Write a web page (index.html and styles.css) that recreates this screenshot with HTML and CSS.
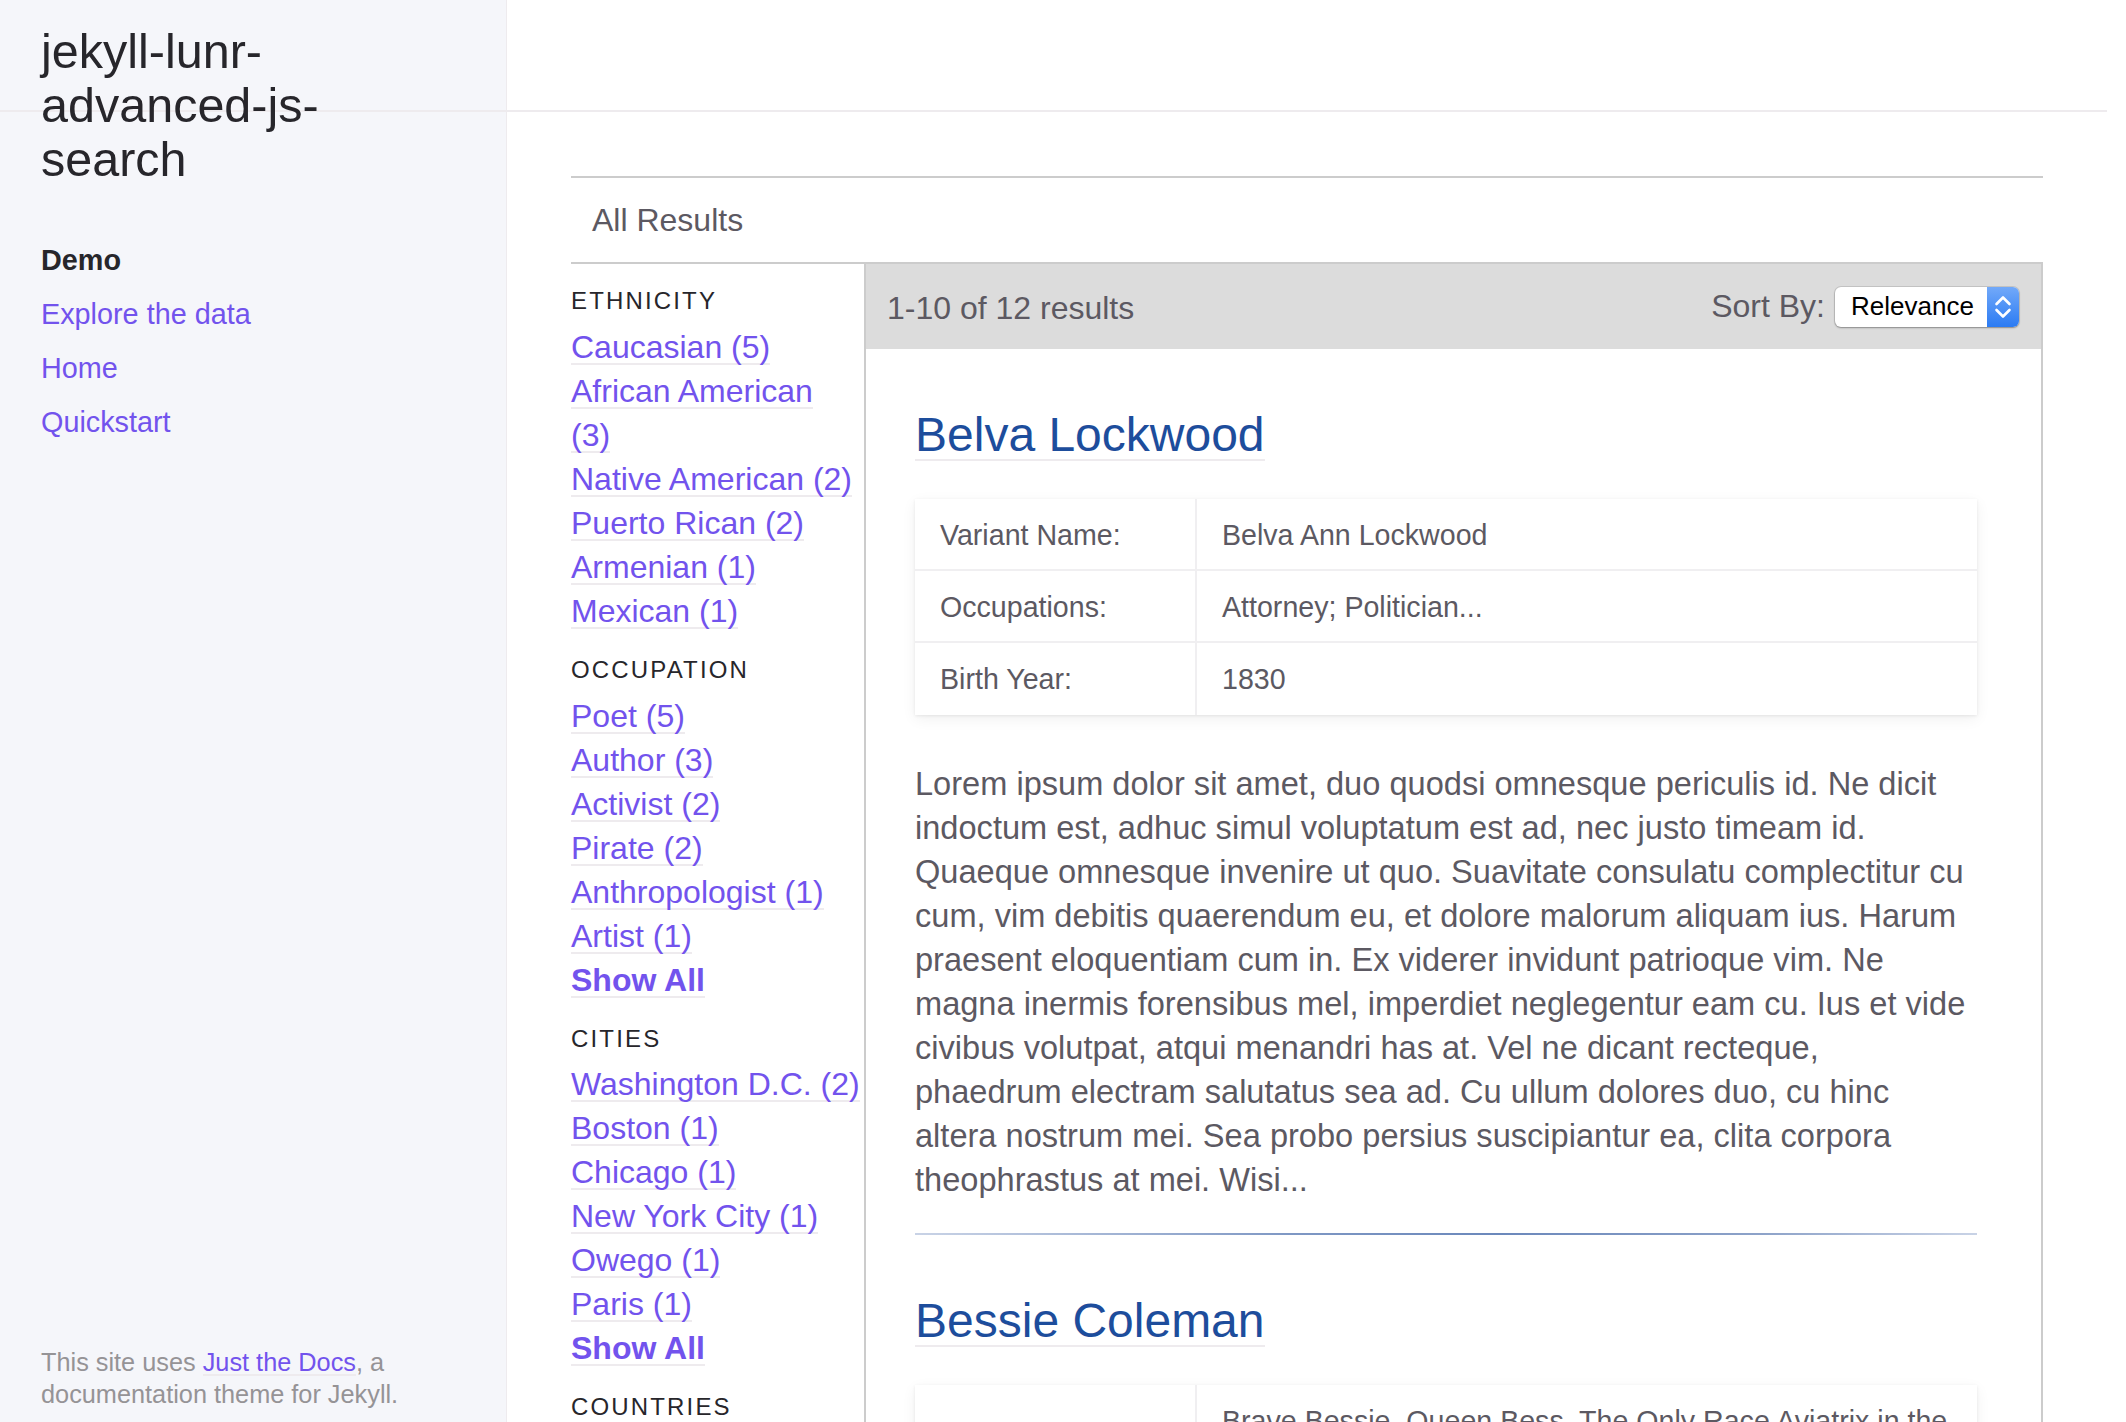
FILE: index.html
```html
<!DOCTYPE html>
<html lang="en">
<head>
<meta charset="utf-8">
<title>Demo - jekyll-lunr-advanced-js-search</title>
<link rel="stylesheet" href="styles.css">
</head>
<body>
<div class="page">
  <aside class="sidebar">
    <h1 class="site-title">jekyll-lunr-advanced-js-search</h1>
    <nav class="nav">
      <div class="nav-item nav-heading">Demo</div>
      <div class="nav-item"><a class="nav-link" href="#">Explore the data</a></div>
      <div class="nav-item"><a class="nav-link" href="#">Home</a></div>
      <div class="nav-item"><a class="nav-link" href="#">Quickstart</a></div>
    </nav>
    <footer class="site-footer">This site uses <a class="ul footer-link" href="#">Just the Docs</a>, a documentation theme for Jekyll.</footer>
  </aside>

  <main class="main">
    <header class="main-header"></header>
    <div class="content">
      <section class="search-box">
        <div class="box-title">All Results</div>
        <div class="box-body">
          <div class="facets">
            <div class="facet-heading first">Ethnicity</div>
            <div class="facet-item"><a class="ul" href="#">Caucasian (5)</a></div>
            <div class="facet-item"><a class="ul" href="#">African American (3)</a></div>
            <div class="facet-item"><a class="ul" href="#">Native American (2)</a></div>
            <div class="facet-item"><a class="ul" href="#">Puerto Rican (2)</a></div>
            <div class="facet-item"><a class="ul" href="#">Armenian (1)</a></div>
            <div class="facet-item"><a class="ul" href="#">Mexican (1)</a></div>

            <div class="facet-heading">Occupation</div>
            <div class="facet-item"><a class="ul" href="#">Poet (5)</a></div>
            <div class="facet-item"><a class="ul" href="#">Author (3)</a></div>
            <div class="facet-item"><a class="ul" href="#">Activist (2)</a></div>
            <div class="facet-item"><a class="ul" href="#">Pirate (2)</a></div>
            <div class="facet-item"><a class="ul" href="#">Anthropologist (1)</a></div>
            <div class="facet-item"><a class="ul" href="#">Artist (1)</a></div>
            <div class="facet-item"><a class="ul show-all" href="#">Show All</a></div>

            <div class="facet-heading">Cities</div>
            <div class="facet-item"><a class="ul" href="#">Washington D.C. (2)</a></div>
            <div class="facet-item"><a class="ul" href="#">Boston (1)</a></div>
            <div class="facet-item"><a class="ul" href="#">Chicago (1)</a></div>
            <div class="facet-item"><a class="ul" href="#">New York City (1)</a></div>
            <div class="facet-item"><a class="ul" href="#">Owego (1)</a></div>
            <div class="facet-item"><a class="ul" href="#">Paris (1)</a></div>
            <div class="facet-item"><a class="ul show-all" href="#">Show All</a></div>

            <div class="facet-heading">Countries</div>
            <div class="facet-item"><a class="ul" href="#">United States (10)</a></div>
            <div class="facet-item"><a class="ul" href="#">France (1)</a></div>
          </div>

          <div class="results">
            <div class="results-bar">
              <div class="count">1-10 of 12 results</div>
              <div class="sort">
                <span class="sort-label">Sort By:</span>
                <div class="select">
                  <span class="select-value">Relevance</span>
                  <span class="stepper">
                    <svg width="32" height="40" viewBox="0 0 32 40" aria-hidden="true">
                      <path d="M9.5 17 L16 10.5 L22.5 17" fill="none" stroke="#fff" stroke-width="2.6" stroke-linecap="round" stroke-linejoin="round"/>
                      <path d="M9.5 23 L16 29.5 L22.5 23" fill="none" stroke="#fff" stroke-width="2.6" stroke-linecap="round" stroke-linejoin="round"/>
                    </svg>
                  </span>
                </div>
              </div>
            </div>

            <article class="result">
              <h2 class="result-name"><a class="ul name-link" href="#">Belva Lockwood</a></h2>
              <table class="meta">
                <tr><td class="label">Variant Name:</td><td class="value">Belva Ann Lockwood</td></tr>
                <tr><td class="label">Occupations:</td><td class="value">Attorney; Politician...</td></tr>
                <tr><td class="label">Birth Year:</td><td class="value">1830</td></tr>
              </table>
              <p class="summary">Lorem ipsum dolor sit amet, duo quodsi omnesque periculis id. Ne dicit<br>
indoctum est, adhuc simul voluptatum est ad, nec justo timeam id.<br>
Quaeque omnesque invenire ut quo. Suavitate consulatu complectitur cu<br>
cum, vim debitis quaerendum eu, et dolore malorum aliquam ius. Harum<br>
praesent eloquentiam cum in. Ex viderer invidunt patrioque vim. Ne<br>
magna inermis forensibus mel, imperdiet neglegentur eam cu. Ius et vide<br>
civibus volutpat, atqui menandri has at. Vel ne dicant recteque,<br>
phaedrum electram salutatus sea ad. Cu ullum dolores duo, cu hinc<br>
altera nostrum mei. Sea probo persius suscipiantur ea, clita corpora<br>
theophrastus at mei. Wisi...</p>
              <hr class="divider">
            </article>

            <article class="result">
              <h2 class="result-name"><a class="ul name-link" href="#">Bessie Coleman</a></h2>
              <table class="meta">
                <tr><td class="label">Variant Name:</td><td class="value">Brave Bessie, Queen Bess, The Only Race Aviatrix in the World; Elizabeth Coleman</td></tr>
                <tr><td class="label">Occupations:</td><td class="value">Aviator...</td></tr>
                <tr><td class="label">Birth Year:</td><td class="value">1892</td></tr>
              </table>
            </article>
          </div>
        </div>
      </section>
    </div>
  </main>
</div>
</body>
</html>
```

FILE: styles.css
```css
* {
  box-sizing: border-box;
}

html,
body {
  margin: 0;
  padding: 0;
}

body {
  font-family: "Liberation Sans", Arial, Helvetica, sans-serif;
  color: #5c5962;
  background: #ffffff;
}

a {
  text-decoration: none;
}

.ul {
  background-image: linear-gradient(#eeebee, #eeebee);
  background-repeat: repeat-x;
  background-position: 0 100%;
  background-size: 1px 2px;
}

.page {
  display: flex;
  height: 100vh;
  overflow: hidden;
}

/* ---------- sidebar ---------- */
.sidebar {
  flex: 0 0 507px;
  display: flex;
  flex-direction: column;
  padding: 24px 41px 12px;
  border-right: 1px solid #eeebee;
  background: linear-gradient(#eeebee, #eeebee) 0 110px / 100% 2px no-repeat, #f5f6fa;
}

.site-title {
  margin: 0;
  width: 380px;
  font-size: 48.5px;
  line-height: 54px;
  font-weight: normal;
  color: #27262b;
}

.nav {
  margin-top: 47px;
}

.nav-item {
  font-size: 28.8px;
  line-height: 54px;
}

.nav-heading {
  font-weight: bold;
  color: #27262b;
}

.nav-link {
  color: #7253ed;
}

.site-footer {
  margin-top: auto;
  font-size: 25.3px;
  line-height: 32px;
  color: #959396;
}

.footer-link {
  color: #7253ed;
}

/* ---------- main ---------- */
.main {
  flex: 1;
  min-width: 0;
  margin-right: 19px;
}

.main-header {
  height: 112px;
  border-bottom: 2px solid #eeebee;
}

.content {
  padding: 64px 64px 0;
}

.search-box {
  border-top: 2px solid #cccccc;
}

.box-title {
  height: 86px;
  padding-left: 21px;
  border-bottom: 2px solid #cccccc;
  font-size: 32px;
  line-height: 84px;
}

.box-body {
  display: flex;
  align-items: stretch;
}

/* facets */
.facets {
  flex: 0 0 295px;
  padding: 21px 3.7px 0 0;
  border-right: 2px solid #cccccc;
}

.facet-heading {
  margin: 21px 0 7.5px;
  font-size: 24px;
  line-height: 32px;
  letter-spacing: 0.09em;
  text-transform: uppercase;
  color: #27262b;
}

.facet-heading.first {
  margin-top: 0;
  margin-bottom: 8px;
}

.facet-item {
  font-size: 32px;
  line-height: 44px;
}

.facet-item a {
  color: #7253ed;
}

.show-all {
  font-weight: bold;
}

/* results */
.results {
  flex: 1;
  min-width: 0;
  border-right: 2px solid #cccccc;
}

.results-bar {
  height: 85px;
  display: flex;
  align-items: center;
  justify-content: space-between;
  padding: 0 22px 0 21px;
  background: #dcdcdc;
  font-size: 32px;
}

.count {
  padding-top: 4px;
}

.sort {
  display: flex;
  align-items: center;
  gap: 10px;
}

.select {
  width: 184px;
  height: 40px;
  display: flex;
  align-items: center;
  justify-content: space-between;
  padding-left: 16px;
  border-radius: 6px;
  background: #ffffff;
  box-shadow: 0 0 0 1px rgba(0, 0, 0, 0.1), 0 1px 2px rgba(0, 0, 0, 0.3);
  overflow: hidden;
  font-size: 26px;
  color: #000000;
}

.stepper {
  width: 32px;
  height: 40px;
  display: flex;
  background: linear-gradient(#72a9f9, #2b7bf3);
}

.result {
  padding: 0 64px 0 49px;
}

.result-name {
  margin: 56px 0 0;
  font-size: 48px;
  line-height: 60px;
  font-weight: normal;
}

.name-link {
  color: #1d4d9c;
}

.meta {
  width: 100%;
  margin-top: 34px;
  border-collapse: separate;
  border-spacing: 0;
  background: #ffffff;
  box-shadow: 0 1px 3px rgba(0, 0, 0, 0.08), 0 4px 14px rgba(0, 0, 0, 0.06);
  font-size: 28.6px;
  line-height: 38px;
}

.meta td {
  padding: 17px 24px 15px 25px;
  border-bottom: 2px solid #f0eff1;
  vertical-align: middle;
}

.meta tr:last-child td {
  border-bottom: 0;
  padding-bottom: 17px;
}

.meta .label {
  width: 282px;
  border-right: 2px solid #f0eff1;
}

.summary {
  margin: 47px 0 0;
  font-size: 32.6px;
  line-height: 44px;
}

.divider {
  height: 2px;
  margin: 31px 0 2px;
  border: 0;
  background: linear-gradient(90deg, #c9d3e6 0%, #7f98c4 35%, #6b88bb 55%, #8ea3c9 80%, #c9d3e6 100%);
}
```
